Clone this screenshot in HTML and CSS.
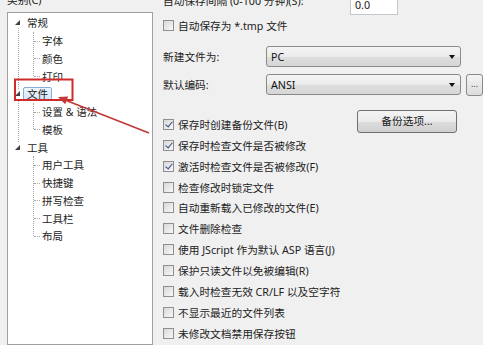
FILE: index.html
```html
<!DOCTYPE html>
<html lang="zh-CN">
<head>
    <meta charset="UTF-8">
    <title>选项 - 文件</title>
    <link rel="stylesheet" href="styles.css">
</head>
<body>
    <div class="page">
        <div class="side">
            <div class="side-label">类别(C)</div>
            <div class="tree">
                <ul class="tree-root">
                    <li class="branch">
                        <div class="row top"><span class="twisty"></span><span class="txt">常规</span></div>
                        <ul class="kids">
                            <li class="row leaf">字体</li>
                            <li class="row leaf">颜色</li>
                            <li class="row leaf">打印</li>
                        </ul>
                    </li>
                    <li class="branch">
                        <div class="row top"><span class="twisty"></span><span class="txt sel">文件</span></div>
                        <ul class="kids">
                            <li class="row leaf">设置 &amp; 语法</li>
                            <li class="row leaf">模板</li>
                        </ul>
                    </li>
                    <li class="branch">
                        <div class="row top"><span class="twisty"></span><span class="txt">工具</span></div>
                        <ul class="kids">
                            <li class="row leaf">用户工具</li>
                            <li class="row leaf">快捷键</li>
                            <li class="row leaf">拼写检查</li>
                            <li class="row leaf">工具栏</li>
                            <li class="row leaf">布局</li>
                        </ul>
                    </li>
                </ul>
            </div>
        </div>

        <div class="main">
            <div class="field interval">
                <span class="interval-label">自动保存间隔 (0-100 分钟)(S):</span>
                <span class="textbox">0.0</span>
            </div>

            <div class="cb"><span class="box"></span>自动保存为 *.tmp 文件</div>

            <div class="field combo-row first">
                <span class="label">新建文件为:</span>
                <span class="combo">PC<span class="arrow"></span></span>
            </div>
            <div class="field combo-row">
                <span class="label">默认编码:</span>
                <span class="combo">ANSI<span class="arrow"></span></span>
                <span class="dots">...</span>
            </div>

            <div class="options">
                <div class="list">
                    <div class="cb"><span class="box on"></span>保存时创建备份文件(B)</div>
                    <div class="cb"><span class="box on"></span>保存时检查文件是否被修改</div>
                    <div class="cb"><span class="box on"></span>激活时检查文件是否被修改(F)</div>
                    <div class="cb"><span class="box"></span>检查修改时锁定文件</div>
                    <div class="cb"><span class="box"></span>自动重新载入已修改的文件(E)</div>
                    <div class="cb"><span class="box"></span>文件删除检查</div>
                    <div class="cb"><span class="box"></span>使用 JScript 作为默认 ASP 语言(J)</div>
                    <div class="cb"><span class="box"></span>保护只读文件以免被编辑(R)</div>
                    <div class="cb"><span class="box"></span>载入时检查无效 CR/LF 以及空字符</div>
                    <div class="cb"><span class="box"></span>不显示最近的文件列表</div>
                    <div class="cb"><span class="box"></span>未修改文档禁用保存按钮</div>
                </div>
                <div class="btn">备份选项...</div>
            </div>
        </div>
    </div>

    <!-- red annotation drawn over the tree -->
    <svg class="mark" width="483" height="345" viewBox="0 0 483 345">
        <rect x="15" y="79.5" width="57.5" height="20.5" fill="none" stroke="#cf2b2b" stroke-width="2"/>
        <line x1="65" y1="100" x2="149" y2="133" stroke="#c23a35" stroke-width="1.8"/>
        <polygon points="58,97 65.2,104.2 68.2,96.6" fill="#c23a35"/>
    </svg>
</body>
</html>
```

FILE: styles.css
```css
body {
    margin: 0;
    background: #f0f0f0;
    font-family: "Noto Sans", "Noto Sans CJK SC", sans-serif;
    font-size: 10.7px;
    color: #222;
    overflow: hidden;
}

.page {
    display: flex;
    width: 483px;
    height: 345px;
}

/* ---- left: category tree ---- */
.side {
    width: 153px;
    flex: none;
}

.side-label {
    margin: -7px 0 0 7px;
    line-height: 14px;
}

.tree {
    margin: 5px 0 0 7px;
    width: 146px;
    height: 333px;
    box-sizing: border-box;
    border: 1px solid #a0a0a0;
    background: #fff;
    padding-top: 1px;
    font-size: 10.5px;
}

.tree ul {
    list-style: none;
    margin: 0;
    padding: 0;
}

.branch {
    position: relative;
}

.branch:not(:last-child)::before {
    content: "";
    position: absolute;
    left: 10px;
    top: 14px;
    bottom: -4px;
    border-left: 1px dotted #a8a8a8;
}

.row {
    height: 17.75px;
    display: flex;
    align-items: center;
}

.top {
    padding-left: 7px;
}

.twisty {
    width: 0;
    height: 0;
    border-right: 5px solid #404040;
    border-top: 5px solid transparent;
    margin-right: 7px;
}

.sel {
    margin-left: -4px;
    padding: 0 3px;
    line-height: 12px;
    border: 1px solid #86aedd;
    border-radius: 2px;
    background: linear-gradient(#eef5fd, #d5e6fb);
}

.kids {
    position: relative;
}

.kids::before {
    content: "";
    position: absolute;
    left: 25px;
    top: 0;
    bottom: 9px;
    border-left: 1px dotted #a8a8a8;
}

.leaf {
    position: relative;
    padding-left: 34px;
}

.leaf::before {
    content: "";
    position: absolute;
    left: 26px;
    top: 50%;
    width: 6px;
    border-top: 1px dotted #a8a8a8;
}

/* ---- right: file options ---- */
.main {
    flex: 1;
    padding-left: 10px;
    margin-top: -6px;
}

.field {
    display: flex;
    align-items: center;
}

.interval {
    height: 21px;
}

.interval-label {
    width: 187px;
    margin-top: -8px;
}

.textbox {
    width: 48px;
    height: 21px;
    box-sizing: border-box;
    border: 1px solid #c5c7cc;
    background: #fff;
    padding: 4px 0 0 4px;
    line-height: 13px;
}

.combo-row {
    height: 21px;
    margin-top: 7px;
}

.combo-row.first {
    margin-top: 10.6px;
}

.label {
    width: 103px;
}

.combo {
    position: relative;
    width: 195px;
    height: 21px;
    box-sizing: border-box;
    border: 1px solid #8a8a8a;
    border-radius: 3px;
    background: linear-gradient(#f4f4f4 0%, #ebebeb 50%, #dedede 51%, #d6d6d6 100%);
    padding-left: 4px;
    display: flex;
    align-items: center;
    color: #111;
}

.arrow {
    position: absolute;
    right: 5px;
    top: 8px;
    border-left: 3.5px solid transparent;
    border-right: 3.5px solid transparent;
    border-top: 4px solid #111;
}

.dots {
    margin-left: 5px;
    width: 17px;
    height: 22px;
    box-sizing: border-box;
    border: 1px solid #8a8a8a;
    border-radius: 3px;
    background: linear-gradient(#f4f4f4, #dcdcdc);
    text-align: center;
    line-height: 17px;
    font-size: 9px;
    color: #444;
}

.options {
    display: flex;
    margin-top: 15px;
}

.list {
    flex: 1;
    padding-top: 3.5px;
}

.btn {
    width: 100px;
    height: 23px;
    margin-right: 26px;
    box-sizing: border-box;
    border: 1px solid #707070;
    border-radius: 3px;
    background: linear-gradient(#f3f3f3 0%, #ebebeb 50%, #dddddd 51%, #cfcfcf 100%);
    text-align: center;
    line-height: 20px;
    color: #1a1a1a;
}

.cb {
    height: 20.9px;
    display: flex;
    align-items: center;
}

.box {
    position: relative;
    width: 11px;
    height: 11px;
    box-sizing: border-box;
    border: 1px solid #8e8f8f;
    background: linear-gradient(135deg, #d8d8d8, #f8f8f8);
    margin-right: 4px;
    flex: none;
}

.box.on::after {
    content: "";
    position: absolute;
    left: 2.5px;
    top: 0;
    width: 3px;
    height: 6px;
    border-right: 1.6px solid #2f4a85;
    border-bottom: 1.6px solid #2f4a85;
    transform: rotate(40deg);
}

.mark {
    position: absolute;
    left: 0;
    top: 0;
    pointer-events: none;
}
```
